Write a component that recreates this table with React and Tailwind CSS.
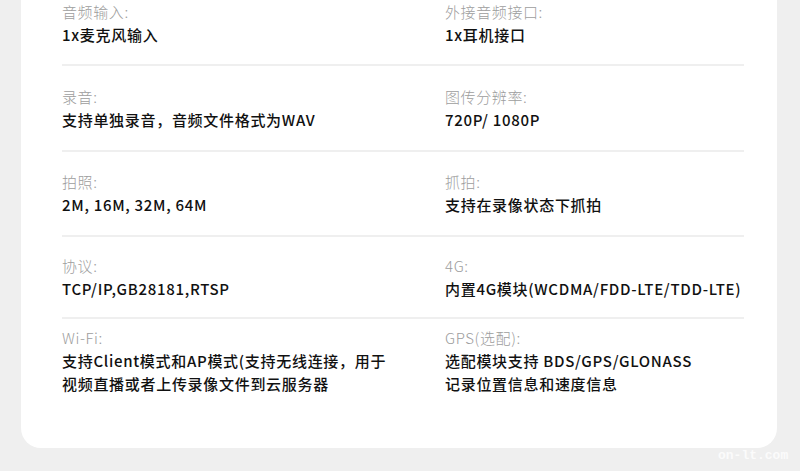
import React from "react";

const rows = [
  {
    pad: "pt-0 pb-[18px]",
    left: { label: "音频输入:", value: ["1x麦克风输入"] },
    right: { label: "外接音频接口:", value: ["1x耳机接口"] },
  },
  {
    pad: "pt-[19px] pb-[19px]",
    left: { label: "录音:", value: ["支持单独录音，音频文件格式为WAV"] },
    right: { label: "图传分辨率:", value: ["720P/ 1080P"] },
  },
  {
    pad: "pt-[18px] pb-[19px]",
    left: { label: "拍照:", value: ["2M, 16M, 32M, 64M"] },
    right: { label: "抓拍:", value: ["支持在录像状态下抓拍"] },
  },
  {
    pad: "pt-[17px] pb-[17px]",
    left: { label: "协议:", value: ["TCP/IP,GB28181,RTSP"] },
    right: { label: "4G:", value: ["内置4G模块(WCDMA/FDD-LTE/TDD-LTE)"] },
  },
  {
    pad: "pt-[7px] pb-0",
    last: true,
    left: {
      label: "Wi-Fi:",
      value: ["支持Client模式和AP模式(支持无线连接，用于", "视频直播或者上传录像文件到云服务器"],
    },
    right: {
      label: "GPS(选配):",
      value: ["选配模块支持 BDS/GPS/GLONASS", "记录位置信息和速度信息"],
    },
  },
];

const Spec = ({ label, value }) => (
  <div>
    <div className="text-[15px] leading-[23px] tracking-[0.6px] font-light text-[#9d9d9d]">
      {label}
    </div>
    <div className="text-[15px] leading-[23px] tracking-[0.7px] font-medium text-[#111]">
      {value.map((line, i) => (
        <div key={i}>{line}</div>
      ))}
    </div>
  </div>
);

export default function App() {
  return (
    <div
      className="relative w-[800px] h-[471px] overflow-hidden bg-[#efefef] pl-[21px] pr-[23px]"
      style={{ fontFamily: '"Noto Sans CJK SC", "Noto Sans", sans-serif' }}
    >
      {/* spec card, top is cut off */}
      <div className="bg-white rounded-b-[20px] pl-[41px] pr-[33px] pb-[53px]">
        {rows.map((row, i) => (
          <div
            key={i}
            className={`grid grid-cols-[383px_1fr] ${row.pad} ${
              row.last ? "" : "border-b-2 border-[#efefef]"
            }`}
          >
            <Spec {...row.left} />
            <Spec {...row.right} />
          </div>
        ))}
      </div>

      {/* watermark */}
      <div
        className="absolute left-[718px] top-[448px] text-[13px] leading-[16px] font-bold text-[#fbfbfb]"
        style={{ fontFamily: '"Liberation Mono", monospace' }}
      >
        on-lt.com
      </div>
    </div>
  );
}
